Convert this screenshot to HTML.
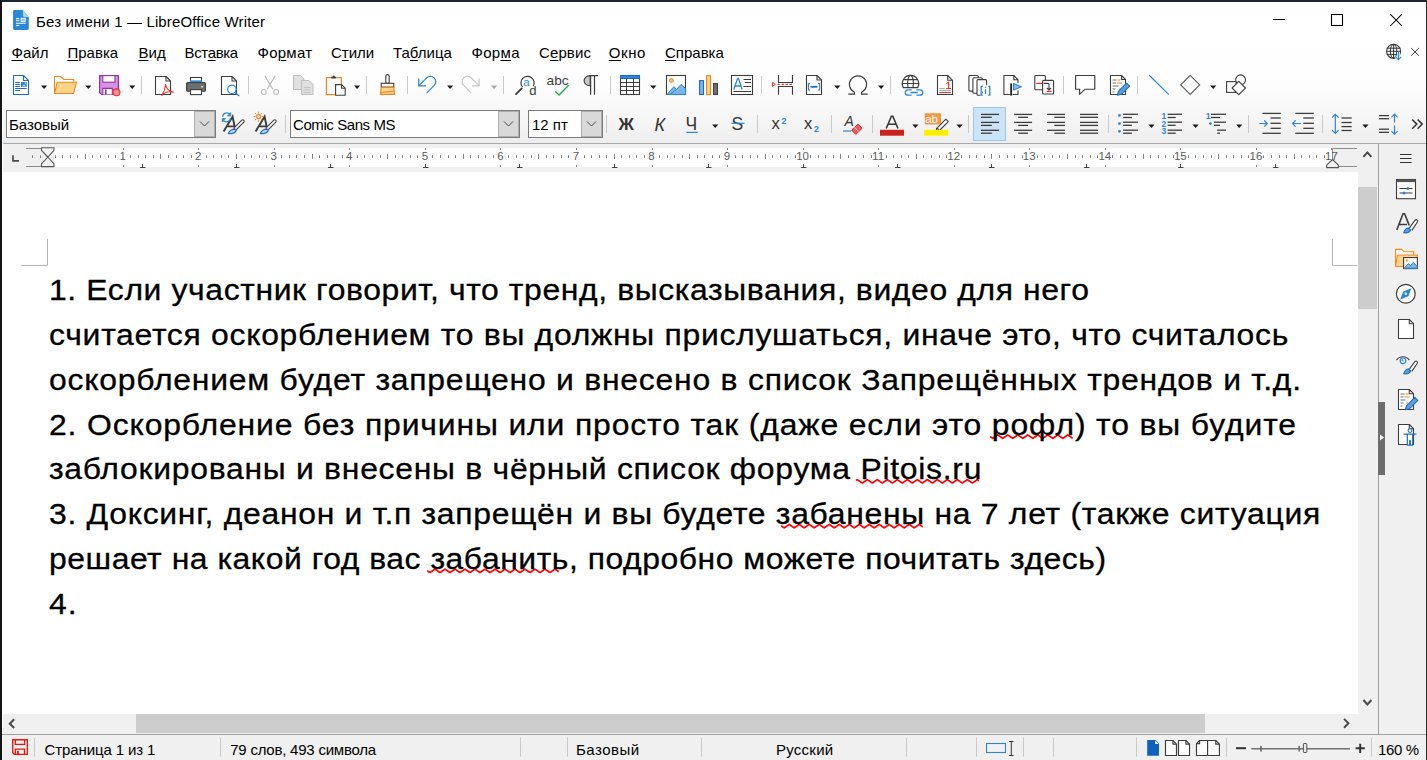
<!DOCTYPE html><html><head><meta charset="utf-8"><style>
*{margin:0;padding:0;box-sizing:border-box}
html,body{width:1427px;height:760px;overflow:hidden;background:#fff;font-family:"Liberation Sans", sans-serif;color:#000}
.a{position:absolute}
.t{position:absolute;white-space:pre;line-height:1}
.doc{-webkit-text-stroke:0.3px #000;transform:scaleX(1.1);transform-origin:0 0}
svg.ov{position:absolute;left:0;top:0;overflow:visible}
u{text-decoration:underline;text-underline-offset:2px;text-decoration-thickness:1px}
</style></head><body>
<div class="a" style="left:0;top:0;width:1427px;height:2px;background:#1f2631"></div>
<div class="a" style="left:0;top:0;width:2px;height:760px;background:#141414"></div>
<div class="a" style="left:1426px;top:0;width:1px;height:760px;background:#2a2a2a"></div>
<div class="a" style="left:2px;top:38px;width:1424px;height:105px;background:linear-gradient(#ffffff 0%,#fdfdfd 45%,#f4f4f4 82%,#ededed 100%)"></div>
<div class="a" style="left:2px;top:143px;width:1424px;height:1px;background:#a9a9a9"></div>
<div class="a" style="left:2px;top:144px;width:1356px;height:28px;background:#f0f0f0"></div>
<div class="a" style="left:54px;top:148px;width:1278px;height:19px;background:#fff"></div>
<div class="a" style="left:2px;top:172px;width:1356px;height:542px;background:#fff"></div>
<div class="a" style="left:1358px;top:144px;width:20px;height:570px;background:#f0f0f0"></div>
<div class="a" style="left:1358px;top:187px;width:19px;height:122px;background:#cdcdcd"></div>
<div class="a" style="left:1378px;top:144px;width:1px;height:590px;background:#a0a0a0"></div>
<div class="a" style="left:1379px;top:144px;width:47px;height:590px;background:#f0f0f0"></div>
<div class="a" style="left:1378px;top:402px;width:7px;height:73px;background:#6d6d6d"></div>
<div class="a" style="left:2px;top:714px;width:1356px;height:20px;background:#f0f0f0"></div>
<div class="a" style="left:136px;top:714px;width:1069px;height:19px;background:#cdcdcd"></div>
<div class="a" style="left:1358px;top:714px;width:20px;height:20px;background:#f0f0f0"></div>
<div class="a" style="left:2px;top:2px;width:1px;height:758px;background:#fff"></div>
<div class="a" style="left:2px;top:734px;width:1424px;height:1px;background:#a0a0a0"></div>
<div class="a" style="left:2px;top:735px;width:1424px;height:25px;background:#f0f0f0"></div>
<svg class="ov" width="1427" height="760" viewBox="0 0 1427 760"><path d="M13.5 75.5H23.5L28.5 80.5V94.5H13.5Z" fill="#fff" stroke="#1c6cc4" stroke-width="1.1" stroke-linejoin="round"/><path d="M23.5 75.5V80.5H28.5" fill="none" stroke="#1c6cc4" stroke-width="1.1" stroke-linejoin="round"/><path d="M15.2 82.5h4.7M15.2 84.5h4.7M15.2 86.5h4.7M15.2 88.5h11.5M15.2 90.5h4.7" stroke="#1c6cc4" stroke-width="1.1"/><rect x="21" y="82" width="5.7" height="5" fill="#2a86d4"/><path d="M22 86.5l2-2 2 2z" fill="#cfe3f7"/><circle cx="25.3" cy="83.2" r=".7" fill="#cfe3f7"/><path d="M41 85.5h6.2l-3.1 3.6z" fill="#1a1a1a"/><path d="M54.5 93.5V76.5h6l3.5 3h9.7v2.6" fill="#fff" stroke="#f0861e" stroke-width="1.1" stroke-linejoin="round"/><path d="M57.2 82.2h19.4l-3.2 11.3H54.5z" fill="#f7d58a" stroke="#f0861e" stroke-width="1.1" stroke-linejoin="round"/><path d="M85.2 85.5h6.2l-3.1 3.6z" fill="#1a1a1a"/><path d="M99.6 75.6h18.8v18.8H101.4l-1.8-1.8z" fill="#d493e3" stroke="#9c2bb2" stroke-width="1.2" stroke-linejoin="round"/><rect x="102.8" y="75.6" width="12.2" height="6.6" fill="#fff" stroke="#9c2bb2" stroke-width="1.1"/><path d="M102.8 94.4v-6h9.5v6" fill="#fff" stroke="#9c2bb2" stroke-width="1.1"/><rect x="105" y="89.5" width="1.6" height="5" fill="#9c2bb2"/><circle cx="116.5" cy="92.3" r="3.4" fill="#f58b8b" stroke="#e5322d" stroke-width="1.1"/><path d="M129.1 85.5h6.2l-3.1 3.6z" fill="#1a1a1a"/><path d="M141.5 76V94" stroke="#c9c9c9" stroke-width="1"/><path d="M155.5 76.5H166.0L170.5 81.0V94.5H155.5Z" fill="#fff" stroke="#3c3c3c" stroke-width="1.1" stroke-linejoin="round"/><path d="M166.0 76.5V81.0H170.5" fill="none" stroke="#3c3c3c" stroke-width="1.1" stroke-linejoin="round"/><path d="M161.8 95.3C164 92 165.5 88 165.6 84.3 166 88.5 169 91 173.5 92.2 169 91.2 165 91.5 161.8 95.3z" fill="none" stroke="#e5322d" stroke-width="1.1" stroke-linejoin="round"/><rect x="190.5" y="77.5" width="11" height="5" fill="#fff" stroke="#3c3c3c" stroke-width="1.1"/><rect x="186.6" y="82.6" width="18.8" height="8.6" rx="1" fill="#6f6f6f" stroke="#3c3c3c" stroke-width="1.1"/><path d="M190 81.3h12" stroke="#2a86d4" stroke-width="1.8"/><rect x="190.5" y="89.6" width="11" height="5" fill="#fff" stroke="#3c3c3c" stroke-width="1.1"/><rect x="201" y="86.3" width="2" height="1" fill="#fff"/><path d="M221.5 76.5H232.0L236.5 81.0V94.5H221.5Z" fill="#fff" stroke="#3c3c3c" stroke-width="1.1" stroke-linejoin="round"/><path d="M232.0 76.5V81.0H236.5" fill="none" stroke="#3c3c3c" stroke-width="1.1" stroke-linejoin="round"/><circle cx="231.9" cy="89.3" r="4.2" fill="#fff" stroke="#2a86d4" stroke-width="1.2"/><path d="M234.9 92.4l4.4 3.6" stroke="#2a86d4" stroke-width="1.3"/><path d="M248.5 76V94" stroke="#c9c9c9" stroke-width="1"/><path d="M264.8 75.8L272.8 89.3M275.2 75.8L267.2 89.3" stroke="#b8b8b8" stroke-width="1.2"/><circle cx="263.8" cy="91.9" r="2.4" fill="#fff" stroke="#b8b8b8" stroke-width="1.1"/><circle cx="276.2" cy="91.9" r="2.4" fill="#fff" stroke="#b8b8b8" stroke-width="1.1"/><path d="M293.5 75.5h7l3.3 3.3v10.7H293.5z" fill="#e0e0e0" stroke="#bdbdbd" stroke-width="1"/><path d="M301.5 80.5h7.5l4 4v10H301.5z" fill="#e0e0e0" stroke="#bdbdbd" stroke-width="1"/><path d="M303.5 87.5h7M303.5 90h7M303.5 92.5h7" stroke="#c4c4c4" stroke-width="1"/><path d="M331 77.6h-4.6v17h8.6M336.4 77.6h5v6.5" fill="none" stroke="#f0861e" stroke-width="1.2"/><path d="M331.2 78.6v-1.8h1.3a1.2 1.2 0 0 1 2.4 0h1.3v1.8z" fill="#3c3c3c"/><path d="M335.6 84.6h6l3.6 3.6v7H335.6z" fill="#fff" stroke="#3c3c3c" stroke-width="1.1" stroke-linejoin="round"/><path d="M341.6 84.6v3.6h3.6" fill="none" stroke="#3c3c3c" stroke-width="1.1"/><path d="M354 85.5h6.2l-3.1 3.6z" fill="#1a1a1a"/><path d="M366.5 76V94" stroke="#c9c9c9" stroke-width="1"/><rect x="385.8" y="74.6" width="3.4" height="9" rx="1.7" fill="#fff" stroke="#3c3c3c" stroke-width="1.1"/><rect x="381.2" y="83.3" width="12.6" height="3.8" fill="#fff" stroke="#3c3c3c" stroke-width="1.1"/><path d="M381.2 87.4h12.6l.8 7H380.4z" fill="#f7d58a" stroke="#f0861e" stroke-width="1.1" stroke-linejoin="round"/><path d="M381 92.5l13-1.5" stroke="#f0861e" stroke-width="1"/><path d="M407.5 76V94" stroke="#c9c9c9" stroke-width="1"/><path d="M418.8 78.4v7.4h7.2" fill="none" stroke="#2a86d4" stroke-width="1.25"/><path d="M419 85.5L426.7 77.9A5.3 5.3 0 0 1 434.2 85.4L426.6 93.1" fill="none" stroke="#2a86d4" stroke-width="1.25"/><path d="M447 85.5h6.2l-3.1 3.6z" fill="#1a1a1a"/><path d="M479.1 78.4v7.4h-7.2" fill="none" stroke="#c6c6c6" stroke-width="1.2"/><path d="M478.9 85.5L471.2 77.9A5.3 5.3 0 0 0 463.7 85.4L471.3 93.1" fill="none" stroke="#c6c6c6" stroke-width="1.2"/><path d="M491 85.5h6.2l-3.1 3.6z" fill="#a8a8a8"/><path d="M503.5 76V94" stroke="#c9c9c9" stroke-width="1"/><path d="M533.2 86.3A6.6 6.6 0 1 0 522.5 87.2" fill="none" stroke="#3c3c3c" stroke-width="1.2"/><path d="M516 94.2l5.8-5.8" stroke="#3c3c3c" stroke-width="1.9" stroke-linecap="round"/><text x="523.2" y="86" font-size="11.5" fill="#2a86d4" font-family="Liberation Sans">a</text><text x="529.2" y="94.6" font-size="13" fill="#3c3c3c" font-family="Liberation Sans">d</text><text x="546.6" y="85" font-size="13.6" fill="#3c3c3c" font-family="Liberation Sans" textLength="22" lengthAdjust="spacingAndGlyphs">abc</text><path d="M555.3 91.4l3.9 3.6 9.4-9.7" fill="none" stroke="#21a95a" stroke-width="1.4"/><path d="M590.2 75.6A6.1 5.1 0 0 0 590.2 85.8z" fill="#c9c9c9" stroke="#3c3c3c" stroke-width="1.1"/><path d="M589.5 75.6H598M590.6 75.6V94.7M594.5 75.6V94.7" fill="none" stroke="#3c3c3c" stroke-width="1.2"/><path d="M610.5 76V94" stroke="#c9c9c9" stroke-width="1"/><rect x="620.5" y="75.5" width="19" height="19" fill="#fff" stroke="#3c3c3c" stroke-width="1.1"/><rect x="620.5" y="75.5" width="19" height="3" fill="#2a86d4" stroke="#1c6cc4" stroke-width="1"/><path d="M620.5 82.5h19M620.5 86.5h19M620.5 90.5h19M626.5 78.5v16M633.5 78.5v16" stroke="#3c3c3c" stroke-width="1"/><path d="M650.2 85.5h6.2l-3.1 3.6z" fill="#1a1a1a"/><rect x="666.5" y="75.5" width="19" height="19" fill="#fff" stroke="#3c3c3c" stroke-width="1.1"/><circle cx="671.4" cy="80.5" r="1.9" fill="#f6c27a" stroke="#f0861e" stroke-width="1"/><path d="M667 94.4L673.8 86.8 676.6 89.4 681 84.4 685.6 88.6V94.4Z" fill="#7db4ea" stroke="#2a86d4" stroke-width="1" stroke-linejoin="round"/><path d="M670 94.4l6.6-5" stroke="#2a86d4" stroke-width="1"/><rect x="699.6" y="80.6" width="3.9" height="13.9" fill="#7db4ea" stroke="#1c6cc4" stroke-width="1.1"/><rect x="706.6" y="75.6" width="3.9" height="18.9" fill="#f7d58a" stroke="#f0861e" stroke-width="1.1"/><rect x="713.6" y="83.6" width="3.9" height="10.9" fill="#707070" stroke="#3c3c3c" stroke-width="1.1"/><rect x="731.5" y="75.5" width="21" height="19" fill="#fff" stroke="#3c3c3c" stroke-width="1.1"/><path d="M733.8 89.5L737.6 78.3h.8l3.8 11.2M735 86h6" fill="none" stroke="#2a86d4" stroke-width="1.3"/><path d="M743.5 79.5h7.5M745 82.5h6M743.5 86.5h7.5M733.5 91.5h17.5" stroke="#3c3c3c" stroke-width="1"/><path d="M761.5 76V94" stroke="#c9c9c9" stroke-width="1"/><path d="M778.5 75v7.5h14V75M778.5 94.8v-8.3h14v8.3" fill="none" stroke="#3c3c3c" stroke-width="1.15"/><path d="M777.5 84.4h15" stroke="#e5322d" stroke-width="1.1" stroke-dasharray="2.4 1.6"/><path d="M772.4 82.3v4.2l2.9-2.1z" fill="#fff" stroke="#e5322d" stroke-width="1"/><path d="M806.5 75.5H817.0L821.5 80.0V94.5H806.5Z" fill="#fff" stroke="#3c3c3c" stroke-width="1.1" stroke-linejoin="round"/><path d="M817.0 75.5V80.0H821.5" fill="none" stroke="#3c3c3c" stroke-width="1.1" stroke-linejoin="round"/><path d="M810 83.6h-1.6v6.4h1.6M818 83.6h1.6v6.4H818" fill="none" stroke="#2a86d4" stroke-width="1.1"/><path d="M810.6 86.8h6.8" stroke="#1c6cc4" stroke-width="1.8"/><path d="M834.2 85.5h6.2l-3.1 3.6z" fill="#1a1a1a"/><path d="M848.3 94.2H854.4V92.2A8.6 8.6 0 1 1 861.6 92.2V94.2H867.7" fill="none" stroke="#3c3c3c" stroke-width="1.2" stroke-linejoin="round"/><path d="M878 85.5h6.2l-3.1 3.6z" fill="#1a1a1a"/><path d="M890.5 76V94" stroke="#c9c9c9" stroke-width="1"/><path d="M903.34 87.6A8.2 8.2 0 1 1 917.66 87.6Z" fill="#fff" stroke="#3c3c3c" stroke-width="1.2" stroke-linejoin="round"/><path d="M903.6 79.6h13.8M902.4 83.5h16.2M910.5 75.4A2.9 8.2 0 0 0 907.97 87.6M910.5 75.4A2.9 8.2 0 0 1 913.03 87.6" fill="none" stroke="#3c3c3c" stroke-width="1.1"/><path d="M911.6 89.8h-3.6a2.7 2.7 0 0 0 0 5.4h3.6M916.4 89.8h3.6a2.7 2.7 0 0 1 0 5.4h-3.6M910.4 92.5h7.4" fill="none" stroke="#2a86d4" stroke-width="1.3"/><path d="M937.5 75.5H947.7L952.5 80.3V94.5H937.5Z" fill="#fff" stroke="#3c3c3c" stroke-width="1.1" stroke-linejoin="round"/><path d="M947.7 75.5V80.3H952.5" fill="none" stroke="#3c3c3c" stroke-width="1.1" stroke-linejoin="round"/><path d="M946.3 83.6l2.3-1.3v6.2M946.2 88.5h4.8" fill="none" stroke="#e5322d" stroke-width="1.2"/><path d="M939.3 88.5h5.3M939.3 90.5h11.5" stroke="#a8a8a8" stroke-width="1"/><path d="M939.3 92.5h11.5" stroke="#e5322d" stroke-width="1.1"/><rect x="968.9" y="75.5" width="9.4" height="15.6" rx="1" fill="#fff" stroke="#3c3c3c" stroke-width="1.1"/><rect x="972.9" y="77.7" width="9.4" height="15.6" rx="1" fill="#fff" stroke="#3c3c3c" stroke-width="1.1"/><path d="M980.4 95.3h-2.4a1 1 0 0 1-1-1V80.6a1 1 0 0 1 1-1h7.6a1 1 0 0 1 1 1v4.6" fill="#fff" stroke="#3c3c3c" stroke-width="1.1"/><path d="M982.8 86.4h-1.6v8.8h1.6M988.2 86.4h1.6v8.8h-1.6M985.5 89.2v4.8" fill="none" stroke="#2a86d4" stroke-width="1.3"/><rect x="984.9" y="86.6" width="1.3" height="1.3" fill="#2a86d4"/><path d="M1009.8 94.5H1003.9V75.5H1013.8L1018 79.7V83M1018 90.6V94.5H1012.6" fill="none" stroke="#3c3c3c" stroke-width="1.1" stroke-linejoin="round"/><path d="M1013.8 75.5V79.7H1018" fill="none" stroke="#3c3c3c" stroke-width="1.1"/><rect x="1010.2" y="83.4" width="1.9" height="12.2" fill="#2a2a2a"/><path d="M1013.6 83.6L1021.4 86.8 1013.6 90Z" fill="#8dbfee" stroke="#2a86d4" stroke-width="1.1" stroke-linejoin="round"/><rect x="1034.8" y="75.5" width="10.6" height="14.2" rx="1" fill="#fff" stroke="#3c3c3c" stroke-width="1.1"/><rect x="1042.6" y="80.4" width="11" height="13.6" rx="1" fill="#fff" stroke="#3c3c3c" stroke-width="1.1"/><path d="M1036.2 83.4h6.4" stroke="#e5322d" stroke-width="1.2"/><path d="M1043.6 83.4h4.4a1 1 0 0 1 1 1v5.4M1046.9 88l2.1 2 2.1-2" fill="none" stroke="#3c3c3c" stroke-width="1.1"/><path d="M1046.6 91.4h5" stroke="#e5322d" stroke-width="1.2"/><path d="M1063.5 76V94" stroke="#c9c9c9" stroke-width="1"/><path d="M1075.6 75.5h19.2v13.7h-9.6l-5.6 5.2v-5.2h-4z" fill="#fff" stroke="#3c3c3c" stroke-width="1.15" stroke-linejoin="round"/><path d="M1110.5 75.5H1121.5L1125.5 79.5V94.5H1110.5Z" fill="#fff" stroke="#3c3c3c" stroke-width="1.1" stroke-linejoin="round"/><path d="M1121.5 75.5V79.5H1125.5" fill="none" stroke="#3c3c3c" stroke-width="1.1" stroke-linejoin="round"/><path d="M1112.5 80h4M1112.5 83h3.5M1112.5 86h6M1112.5 89h3M1112.5 92h2" stroke="#6f6f6f" stroke-width="1"/><path d="M1117.5 80h3M1116.5 83h5.5M1119 89h2" stroke="#f0861e" stroke-width="1"/><path d="M1117.4 95.3l1-4 8.2-8.2 3 3-8.2 8.2z" fill="#5c9fe3" stroke="#1c6cc4" stroke-width="1.1" stroke-linejoin="round"/><path d="M1137.5 76V94" stroke="#c9c9c9" stroke-width="1"/><path d="M1149.2 75.3L1168.9 94.6" stroke="#2a86d4" stroke-width="1.25"/><path d="M1190.2 75.4L1199.7 84.9 1190.2 94.4 1180.7 84.9Z" fill="#fff" stroke="#5a5a5a" stroke-width="1.2" stroke-linejoin="round"/><path d="M1210.1 85.5h6.2l-3.1 3.6z" fill="#1a1a1a"/><rect x="1226.6" y="81.6" width="9.6" height="10.8" fill="#fff" stroke="#3c3c3c" stroke-width="1.1"/><circle cx="1240.6" cy="79.8" r="4.9" fill="#fff" stroke="#3c3c3c" stroke-width="1.1"/><path d="M1238.8 81.3L1245.5 88 1238.8 94.7 1232.1 88Z" fill="#fff" stroke="#3c3c3c" stroke-width="1.1" stroke-linejoin="round"/><path d="M13 11.4a1.4 1.4 0 0 1 1.4-1.4h8.5l5.9 6.9v11.7a1.4 1.4 0 0 1-1.4 1.4H14.4a1.4 1.4 0 0 1-1.4-1.4z" fill="#2b87d9"/><path d="M22.9 10v5.6a1.3 1.3 0 0 0 1.3 1.3h4.6z" fill="#a9d5f6"/><path d="M16 18.6h3.3M16 20.8h3.3M16 23.3h9.8M16 25.5h3.3" stroke="#fff" stroke-width="1.1"/><rect x="21.1" y="18.2" width="4.4" height="3.3" fill="#8ec8f3" stroke="#fff" stroke-width=".8"/><path d="M1273 19.5h12" stroke="#000" stroke-width="1"/><rect x="1331.5" y="14.5" width="11" height="11" fill="none" stroke="#000" stroke-width="1.1"/><path d="M1390.2 14.2l11.8 11.8M1402 14.2l-11.8 11.8" stroke="#000" stroke-width="1.05"/><circle cx="1393.6" cy="51.3" r="7" fill="none" stroke="#333" stroke-width="1.1"/><path d="M1386.6 48.2h14M1386.6 51.3h14M1386.6 54.4h12M1393.6 44.3v14" stroke="#333" stroke-width="1"/><ellipse cx="1393.6" cy="51.3" rx="3.2" ry="7" fill="none" stroke="#333" stroke-width="1"/><path d="M1398.5 52v7.4M1395.7 56.8l2.8 2.8 2.8-2.8" fill="none" stroke="#fff" stroke-width="2.6"/><path d="M1398.5 52v7.4M1395.7 56.8l2.8 2.8 2.8-2.8" fill="none" stroke="#2a86d4" stroke-width="1.2"/><path d="M1411.2 48.1l7.6 7.6M1418.8 48.1l-7.6 7.6" stroke="#333" stroke-width="1"/><rect x="6.5" y="110.5" width="209" height="27" fill="#fff" stroke="#7b7b7b" stroke-width="1"/><rect x="194.5" y="111.5" width="20" height="25" fill="#d9d9d9" stroke="#adadad" stroke-width="1"/><path d="M200 121.5l4.5 4.5 4.5-4.5" fill="none" stroke="#444" stroke-width="1"/><path d="M223.6 131.4L232.6 116.6L234.6 126.4H227.6" fill="none" stroke="#3c3c3c" stroke-width="1.9" stroke-linejoin="miter"/><path d="M235.6 128.4L242.8 121.2" stroke="#3c3c3c" stroke-width="3.8" stroke-linecap="round"/><path d="M235.6 128.4L242.8 121.2" stroke="#fff" stroke-width="1.7" stroke-linecap="round"/><path d="M228.4 133.4C229.4 130.6 232.6 128.4 236.4 129.6C236.4 132.4 232.4 134.2 228.4 133.4Z" fill="#cfe3f7" stroke="#1c6cc4" stroke-width="1.3" stroke-linejoin="round"/><path d="M222.6 116.6a4.1 4.1 0 0 1 7.4-2M230.4 118.2a4.1 4.1 0 0 1-7.4 2" fill="none" stroke="#2a86d4" stroke-width="1.3"/><path d="M230.7 112.6v3.4h-3.2z M222.3 122v-3.4h3.2z" fill="#2a86d4" stroke="#2a86d4" stroke-width=".8" stroke-linejoin="round"/><path d="M255.6 131.4L264.6 116.6L266.6 126.4H259.6" fill="none" stroke="#3c3c3c" stroke-width="1.9" stroke-linejoin="miter"/><path d="M267.6 128.4L274.8 121.2" stroke="#3c3c3c" stroke-width="3.8" stroke-linecap="round"/><path d="M267.6 128.4L274.8 121.2" stroke="#fff" stroke-width="1.7" stroke-linecap="round"/><path d="M260.4 133.4C261.4 130.6 264.6 128.4 268.4 129.6C268.4 132.4 264.4 134.2 260.4 133.4Z" fill="#cfe3f7" stroke="#1c6cc4" stroke-width="1.3" stroke-linejoin="round"/><circle cx="258.6" cy="116.6" r="2" fill="none" stroke="#f0861e" stroke-width="1.1"/><path d="M258.6 111.6v2M258.6 119.6v2M253.6 116.6h2M261.6 116.6h2M255 113l1.4 1.4M260.8 118.8l1.4 1.4M255 120.2l1.4-1.4M260.8 114.4l1.4-1.4" stroke="#f0861e" stroke-width="1"/><path d="M285.5 115V133" stroke="#c9c9c9" stroke-width="1"/><rect x="290.5" y="110.5" width="229" height="27" fill="#fff" stroke="#7b7b7b" stroke-width="1"/><rect x="498.5" y="111.5" width="20" height="25" fill="#d9d9d9" stroke="#adadad" stroke-width="1"/><path d="M504 121.5l4.5 4.5 4.5-4.5" fill="none" stroke="#444" stroke-width="1"/><rect x="528.5" y="110.5" width="74" height="27" fill="#fff" stroke="#7b7b7b" stroke-width="1"/><rect x="581.5" y="111.5" width="20" height="25" fill="#d9d9d9" stroke="#adadad" stroke-width="1"/><path d="M587 121.5l4.5 4.5 4.5-4.5" fill="none" stroke="#444" stroke-width="1"/><path d="M606.5 115V133" stroke="#c9c9c9" stroke-width="1"/><text x="618.6" y="130" font-size="17" font-weight="bold" fill="#333" font-family="Liberation Sans">Ж</text><text x="654.5" y="130.6" font-size="18" font-style="italic" fill="#333" font-family="Liberation Sans">К</text><text x="685.6" y="130" font-size="17.5" fill="#333" font-family="Liberation Sans">Ч</text><path d="M686.3 132.4h11.4" stroke="#2a86d4" stroke-width="1.2"/><path d="M712.1 124.5h6.2l-3.1 3.6z" fill="#1a1a1a"/><text x="731.6" y="130.2" font-size="17.5" fill="#333" font-family="Liberation Sans">S</text><path d="M731.2 123.3h13.4" stroke="#2a86d4" stroke-width="1.2"/><path d="M757.5 115V133" stroke="#c9c9c9" stroke-width="1"/><text x="771.6" y="128.7" font-size="16.6" fill="#333" font-family="Liberation Sans">x</text><text x="781.5" y="123.6" font-size="9" font-weight="bold" fill="#2a86d4" font-family="Liberation Sans">2</text><text x="804.1" y="128.7" font-size="16.6" fill="#333" font-family="Liberation Sans">x</text><text x="814" y="131.6" font-size="9" font-weight="bold" fill="#2a86d4" font-family="Liberation Sans">2</text><path d="M831.5 115V133" stroke="#c9c9c9" stroke-width="1"/><text x="844.5" y="126" font-size="14" font-style="italic" fill="#333" font-family="Liberation Sans">A</text><path d="M843 131h8" stroke="#2a86d4" stroke-width="1.2"/><path d="M851.6 130.2l6.4-6.2 4.2 4.2-6.4 6.2z" fill="#f05a5a" stroke="#d32f2f" stroke-width="1" stroke-linejoin="round"/><path d="M854.6 127.3l4.2 4.2" stroke="#fff" stroke-width=".8"/><path d="M872.5 115V133" stroke="#c9c9c9" stroke-width="1"/><path d="M886.2 128.5L891.4 116.3h1.4l5.2 12.2M888 124.3h8.2" fill="none" stroke="#333" stroke-width="1.5"/><rect x="880" y="129.8" width="24" height="5.9" fill="#c9211e"/><path d="M912.3 124.5h6.2l-3.1 3.6z" fill="#1a1a1a"/><rect x="924.8" y="113.2" width="16.2" height="11.3" fill="#f79646"/><text x="925.2" y="123.4" font-size="11.5" fill="#fff" font-family="Liberation Sans">ab</text><path d="M936.5 128.6l9.4-9.4 2.4 2.4-9.4 9.4h-2.4z" fill="#fff" stroke="#3c3c3c" stroke-width="1.1" stroke-linejoin="round"/><path d="M936.5 128.6l1 -1 1.6 1.6-1 1z" fill="#3c3c3c"/><rect x="924.1" y="129.8" width="24" height="5.9" fill="#ffee00"/><path d="M956.5 124.5h6.2l-3.1 3.6z" fill="#1a1a1a"/><path d="M968.5 115V133" stroke="#c9c9c9" stroke-width="1"/><rect x="973.5" y="107.5" width="32" height="33" fill="#cce4f7" stroke="#99c9ef" stroke-width="1"/><path d="M981 114.4H999.1" stroke="#3c3c3c" stroke-width="1.3"/><path d="M981 117.3H991.8" stroke="#3c3c3c" stroke-width="1.3"/><path d="M981 122.4H999.1" stroke="#3c3c3c" stroke-width="1.3"/><path d="M981 125.4H991.8" stroke="#3c3c3c" stroke-width="1.3"/><path d="M981 130.3H999.1" stroke="#3c3c3c" stroke-width="1.3"/><path d="M981 133.2H991.8" stroke="#3c3c3c" stroke-width="1.3"/><path d="M1014.1 114.4H1032.1" stroke="#3c3c3c" stroke-width="1.3"/><path d="M1018.2 117.3H1028" stroke="#3c3c3c" stroke-width="1.3"/><path d="M1014.1 122.4H1032.1" stroke="#3c3c3c" stroke-width="1.3"/><path d="M1018.2 125.4H1028" stroke="#3c3c3c" stroke-width="1.3"/><path d="M1014.1 130.3H1032.1" stroke="#3c3c3c" stroke-width="1.3"/><path d="M1018.2 133.2H1028" stroke="#3c3c3c" stroke-width="1.3"/><path d="M1047.1 114.4H1065" stroke="#3c3c3c" stroke-width="1.3"/><path d="M1054.3 117.3H1065" stroke="#3c3c3c" stroke-width="1.3"/><path d="M1047.1 122.4H1065" stroke="#3c3c3c" stroke-width="1.3"/><path d="M1054.3 125.4H1065" stroke="#3c3c3c" stroke-width="1.3"/><path d="M1047.1 130.3H1065" stroke="#3c3c3c" stroke-width="1.3"/><path d="M1054.3 133.2H1065" stroke="#3c3c3c" stroke-width="1.3"/><path d="M1080 114.4H1098" stroke="#3c3c3c" stroke-width="1.3"/><path d="M1080 117.3H1098" stroke="#3c3c3c" stroke-width="1.3"/><path d="M1080 122.4H1098" stroke="#3c3c3c" stroke-width="1.3"/><path d="M1080 125.4H1098" stroke="#3c3c3c" stroke-width="1.3"/><path d="M1080 130.3H1098" stroke="#3c3c3c" stroke-width="1.3"/><path d="M1080 133.2H1098" stroke="#3c3c3c" stroke-width="1.3"/><path d="M1108.5 115V133" stroke="#c9c9c9" stroke-width="1"/><circle cx="1119.5" cy="115.4" r="1.4" fill="#2a86d4"/><circle cx="1119.5" cy="123.6" r="1.4" fill="#2a86d4"/><circle cx="1119.5" cy="131.3" r="1.4" fill="#2a86d4"/><path d="M1123.1 114.3H1137.9" stroke="#3c3c3c" stroke-width="1.3"/><path d="M1123.1 117.5H1131.9" stroke="#3c3c3c" stroke-width="1.3"/><path d="M1123.1 122.2H1137.9" stroke="#3c3c3c" stroke-width="1.3"/><path d="M1123.1 125.3H1131.9" stroke="#3c3c3c" stroke-width="1.3"/><path d="M1123.1 130.2H1137.9" stroke="#3c3c3c" stroke-width="1.3"/><path d="M1123.1 133.2H1131.9" stroke="#3c3c3c" stroke-width="1.3"/><path d="M1148.4 124.5h6.2l-3.1 3.6z" fill="#1a1a1a"/><text x="1161.6" y="118.6" font-size="8.5" font-weight="bold" fill="#2a86d4" font-family="Liberation Sans">1</text><text x="1161.6" y="126.6" font-size="8.5" font-weight="bold" fill="#2a86d4" font-family="Liberation Sans">2</text><text x="1161.6" y="134.4" font-size="8.5" font-weight="bold" fill="#2a86d4" font-family="Liberation Sans">3</text><path d="M1167.6 114.3H1182" stroke="#3c3c3c" stroke-width="1.3"/><path d="M1167.6 117.5H1175.7" stroke="#3c3c3c" stroke-width="1.3"/><path d="M1167.6 122.2H1182" stroke="#3c3c3c" stroke-width="1.3"/><path d="M1167.6 125.3H1175.7" stroke="#3c3c3c" stroke-width="1.3"/><path d="M1167.6 130.2H1182" stroke="#3c3c3c" stroke-width="1.3"/><path d="M1167.6 133.2H1175.7" stroke="#3c3c3c" stroke-width="1.3"/><path d="M1192.5 124.5h6.2l-3.1 3.6z" fill="#1a1a1a"/><text x="1205.8" y="118.6" font-size="8.5" font-weight="bold" fill="#2a86d4" font-family="Liberation Sans">1</text><circle cx="1210.4" cy="123.6" r="1.4" fill="#2a86d4"/><path d="M1211 114.3H1226" stroke="#3c3c3c" stroke-width="1.3"/><path d="M1211 117.5H1220" stroke="#3c3c3c" stroke-width="1.3"/><path d="M1214 122.2H1226" stroke="#3c3c3c" stroke-width="1.3"/><path d="M1214 125.3H1220" stroke="#3c3c3c" stroke-width="1.3"/><path d="M1217.2 130.2H1226" stroke="#3c3c3c" stroke-width="1.3"/><path d="M1217.2 133.2H1220" stroke="#3c3c3c" stroke-width="1.3"/><path d="M1236.1 124.5h6.2l-3.1 3.6z" fill="#1a1a1a"/><path d="M1248.5 115V133" stroke="#c9c9c9" stroke-width="1"/><path d="M1262.4 113.4H1280.8" stroke="#3c3c3c" stroke-width="1.3"/><path d="M1270.5 118H1280.8" stroke="#3c3c3c" stroke-width="1.3"/><path d="M1270.5 123.3H1280.8" stroke="#3c3c3c" stroke-width="1.3"/><path d="M1270.5 128.3H1280.8" stroke="#3c3c3c" stroke-width="1.3"/><path d="M1262.4 133.3H1280.8" stroke="#3c3c3c" stroke-width="1.3"/><path d="M1259.3 123.5h7.8M1264.2 120.4l3.1 3.1-3.1 3.1" fill="none" stroke="#2a86d4" stroke-width="1.2"/><path d="M1295.3 113.4H1313.9" stroke="#3c3c3c" stroke-width="1.3"/><path d="M1303.3 118H1313.9" stroke="#3c3c3c" stroke-width="1.3"/><path d="M1303.3 123.3H1313.9" stroke="#3c3c3c" stroke-width="1.3"/><path d="M1303.3 128.3H1313.9" stroke="#3c3c3c" stroke-width="1.3"/><path d="M1295.3 133.3H1313.9" stroke="#3c3c3c" stroke-width="1.3"/><path d="M1300.9 123.5h-8.2M1295.6 120.4l-3.1 3.1 3.1 3.1" fill="none" stroke="#2a86d4" stroke-width="1.2"/><path d="M1322.5 115V133" stroke="#c9c9c9" stroke-width="1"/><path d="M1335.3 114.6v18.6M1332 117.6l3.3-3.3 3.3 3.3M1332 130.2l3.3 3.3 3.3-3.3" fill="none" stroke="#2a86d4" stroke-width="1.2"/><path d="M1341.5 118H1351.7" stroke="#3c3c3c" stroke-width="1.3"/><path d="M1341.5 122.5H1351.7" stroke="#3c3c3c" stroke-width="1.3"/><path d="M1341.5 126.6H1351.7" stroke="#3c3c3c" stroke-width="1.3"/><path d="M1341.5 130.5H1351.7" stroke="#3c3c3c" stroke-width="1.3"/><path d="M1362.3 124.5h6.2l-3.1 3.6z" fill="#1a1a1a"/><path d="M1379 115.6H1389" stroke="#3c3c3c" stroke-width="1.3"/><path d="M1379 118.7H1389" stroke="#3c3c3c" stroke-width="1.3"/><path d="M1379 129.2H1389" stroke="#3c3c3c" stroke-width="1.3"/><path d="M1379 132.3H1389" stroke="#3c3c3c" stroke-width="1.3"/><path d="M1394.5 114.2v8.4M1391.4 117.3l3.1-3.1 3.1 3.1M1394.5 125.4v8.8M1391.4 131.1l3.1 3.1 3.1-3.1" fill="none" stroke="#2a86d4" stroke-width="1.2"/><path d="M1412.2 119.5l4.6 4.6-4.6 4.6M1417.6 119.5l4.6 4.6-4.6 4.6" fill="none" stroke="#333" stroke-width="1.5"/><path d="M13 155.3v5.5h6" fill="none" stroke="#4a4a4a" stroke-width="1.7"/><path d="M32.5 155.3V158 M40.5 155.3V158 M55.5 155.3V158 M62.5 155.3V158 M70.5 155.3V158 M77.5 155.3V158 M85.5 153.8V158.8 M92.5 155.3V158 M100.5 155.3V158 M108.5 155.3V158 M115.5 155.3V158 M130.5 155.3V158 M138.5 155.3V158 M145.5 155.3V158 M153.5 155.3V158 M160.5 153.8V158.8 M168.5 155.3V158 M176.5 155.3V158 M183.5 155.3V158 M191.5 155.3V158 M206.5 155.3V158 M213.5 155.3V158 M221.5 155.3V158 M228.5 155.3V158 M236.5 153.8V158.8 M244.5 155.3V158 M251.5 155.3V158 M259.5 155.3V158 M266.5 155.3V158 M281.5 155.3V158 M289.5 155.3V158 M296.5 155.3V158 M304.5 155.3V158 M312.5 153.8V158.8 M319.5 155.3V158 M327.5 155.3V158 M334.5 155.3V158 M342.5 155.3V158 M357.5 155.3V158 M364.5 155.3V158 M372.5 155.3V158 M380.5 155.3V158 M387.5 153.8V158.8 M395.5 155.3V158 M402.5 155.3V158 M410.5 155.3V158 M417.5 155.3V158 M432.5 155.3V158 M440.5 155.3V158 M448.5 155.3V158 M455.5 155.3V158 M463.5 153.8V158.8 M470.5 155.3V158 M478.5 155.3V158 M485.5 155.3V158 M493.5 155.3V158 M508.5 155.3V158 M516.5 155.3V158 M523.5 155.3V158 M531.5 155.3V158 M538.5 153.8V158.8 M546.5 155.3V158 M553.5 155.3V158 M561.5 155.3V158 M568.5 155.3V158 M584.5 155.3V158 M591.5 155.3V158 M599.5 155.3V158 M606.5 155.3V158 M614.5 153.8V158.8 M621.5 155.3V158 M629.5 155.3V158 M636.5 155.3V158 M644.5 155.3V158 M659.5 155.3V158 M667.5 155.3V158 M674.5 155.3V158 M682.5 155.3V158 M689.5 153.8V158.8 M697.5 155.3V158 M704.5 155.3V158 M712.5 155.3V158 M719.5 155.3V158 M735.5 155.3V158 M742.5 155.3V158 M750.5 155.3V158 M757.5 155.3V158 M765.5 153.8V158.8 M772.5 155.3V158 M780.5 155.3V158 M787.5 155.3V158 M795.5 155.3V158 M810.5 155.3V158 M818.5 155.3V158 M825.5 155.3V158 M833.5 155.3V158 M840.5 153.8V158.8 M848.5 155.3V158 M855.5 155.3V158 M863.5 155.3V158 M871.5 155.3V158 M886.5 155.3V158 M893.5 155.3V158 M901.5 155.3V158 M908.5 155.3V158 M916.5 153.8V158.8 M923.5 155.3V158 M931.5 155.3V158 M939.5 155.3V158 M946.5 155.3V158 M961.5 155.3V158 M969.5 155.3V158 M976.5 155.3V158 M984.5 155.3V158 M991.5 153.8V158.8 M999.5 155.3V158 M1007.5 155.3V158 M1014.5 155.3V158 M1022.5 155.3V158 M1037.5 155.3V158 M1044.5 155.3V158 M1052.5 155.3V158 M1059.5 155.3V158 M1067.5 153.8V158.8 M1075.5 155.3V158 M1082.5 155.3V158 M1090.5 155.3V158 M1097.5 155.3V158 M1112.5 155.3V158 M1120.5 155.3V158 M1127.5 155.3V158 M1135.5 155.3V158 M1143.5 153.8V158.8 M1150.5 155.3V158 M1158.5 155.3V158 M1165.5 155.3V158 M1173.5 155.3V158 M1188.5 155.3V158 M1195.5 155.3V158 M1203.5 155.3V158 M1211.5 155.3V158 M1218.5 153.8V158.8 M1226.5 155.3V158 M1233.5 155.3V158 M1241.5 155.3V158 M1248.5 155.3V158 M1263.5 155.3V158 M1271.5 155.3V158 M1279.5 155.3V158 M1286.5 155.3V158 M1294.5 153.8V158.8 M1301.5 155.3V158 M1309.5 155.3V158 M1316.5 155.3V158 M1324.5 155.3V158" stroke="#7c7c7c" stroke-width="1"/><path d="M123.5 148V150M123.5 165V167 M198.5 148V150M198.5 165V167 M274.5 148V150M274.5 165V167 M349.5 148V150M349.5 165V167 M425.5 148V150M425.5 165V167 M500.5 148V150M500.5 165V167 M576.5 148V150M576.5 165V167 M652.5 148V150M652.5 165V167 M727.5 148V150M727.5 165V167 M803.5 148V150M803.5 165V167 M878.5 148V150M878.5 165V167 M954.5 148V150M954.5 165V167 M1029.5 148V150M1029.5 165V167 M1105.5 148V150M1105.5 165V167 M1180.5 148V150M1180.5 165V167 M1256.5 148V150M1256.5 165V167 M1331.5 148V150M1331.5 165V167" stroke="#8a8a8a" stroke-width="1"/><path d="M142.5 164V167.5M140.0 167.5H145.5 M236.5 164V167.5M234.0 167.5H239.5 M330.5 164V167.5M328.0 167.5H333.5 M425.5 164V167.5M423.0 167.5H428.5 M519.5 164V167.5M517.0 167.5H522.5 M614.5 164V167.5M612.0 167.5H617.5 M708.5 164V167.5M706.0 167.5H711.5 M803.5 164V167.5M801.0 167.5H806.5 M897.5 164V167.5M895.0 167.5H900.5 M991.5 164V167.5M989.0 167.5H994.5 M1086.5 164V167.5M1084.0 167.5H1089.5 M1180.5 164V167.5M1178.0 167.5H1183.5 M1275.5 164V167.5M1273.0 167.5H1278.5" stroke="#444" stroke-width="1"/><path d="M26 148.5H42M26 166.5H42" stroke="#8c8c8c" stroke-width="1"/><path d="M41.5 147.8H54V150.3L47.8 157 54 163.9V166.6H41.5V163.9L47.8 157 41.5 150.3Z" fill="#f2f2f2" stroke="#555" stroke-width="1.1" stroke-linejoin="round"/><path d="M1357 148.5H1332.5V160M1332 166.5H1357" fill="none" stroke="#8c8c8c" stroke-width="1"/><path d="M1332.5 159.5L1338.4 165.2V167.6H1326.6V165.2Z" fill="#f2f2f2" stroke="#555" stroke-width="1.1" stroke-linejoin="round"/><path d="M1363.4 156.8l4 -4.4 4 4.4" fill="none" stroke="#4a4a4a" stroke-width="2"/><path d="M1363.4 700l4 4.5 4-4.5" fill="none" stroke="#4a4a4a" stroke-width="2"/><path d="M14.2 719.3l-4.4 4.4 4.4 4.4" fill="none" stroke="#4a4a4a" stroke-width="2.1"/><path d="M1344 718.9l4.4 4.4-4.4 4.4" fill="none" stroke="#4a4a4a" stroke-width="2"/><path d="M1400 154.5h11.6M1400 158.5h11.6M1400 162.5h11.6" stroke="#333" stroke-width="1.1"/><rect x="1396.5" y="179.5" width="19" height="19.2" fill="#fff" stroke="#3c3c3c" stroke-width="1.1"/><rect x="1396.5" y="179.5" width="19" height="2.6" fill="#555"/><path d="M1399.5 188.5h13M1399.5 193h13" stroke="#3c3c3c" stroke-width="1"/><circle cx="1407.8" cy="188.5" r="1.5" fill="#2a86d4"/><circle cx="1404" cy="193" r="1.5" fill="#2a86d4"/><path d="M1396.8 230L1403 213.8h1.6l4.6 11.6M1399.5 224.5h7.5" fill="none" stroke="#3c3c3c" stroke-width="1.6"/><path d="M1409 228.6l6.2-8.6a1.5 1.5 0 0 1 2.3 1.8l-5.6 8.6" fill="#fff" stroke="#3c3c3c" stroke-width="1.1"/><path d="M1408.3 228c-2 0-3.6 1.8-4.6 4.8 3.1.4 5.8-.5 7-2.8z" fill="#5c9fe3" stroke="#1c6cc4" stroke-width="1.1" stroke-linejoin="round"/><path d="M1395.6 266V249.4h6l2.4 2.4h9.6v3" fill="#fff" stroke="#f0861e" stroke-width="1.1"/><path d="M1397.4 255h20l-2.5 11.5H1395.6z" fill="#f7d58a" stroke="#f0861e" stroke-width="1.1"/><rect x="1403.6" y="257.6" width="13.8" height="11" fill="#fff" stroke="#3c3c3c" stroke-width="1.1"/><circle cx="1406.8" cy="260.6" r="1.1" fill="#f0861e"/><path d="M1404 268.2l4.5-4.6 2 2 2.8-3.2 4 4v1.8z" fill="#7db4ea" stroke="#2a86d4" stroke-width=".9"/><circle cx="1405.8" cy="293.8" r="9.4" fill="#fff" stroke="#3c3c3c" stroke-width="1.2"/><path d="M1411.4 288.2l-3 8-8.2 3.2 3-8z" fill="#2a86d4"/><circle cx="1405.8" cy="293.8" r="1.2" fill="#fff"/><path d="M1398.5 319.5H1409.3L1413.5 323.7V338.5H1398.5Z" fill="#fff" stroke="#3c3c3c" stroke-width="1.1" stroke-linejoin="round"/><path d="M1409.3 319.5V323.7H1413.5" fill="none" stroke="#3c3c3c" stroke-width="1.1" stroke-linejoin="round"/><path d="M1396.4 360.2c3.4-4.6 9.6-4.6 13 0" fill="none" stroke="#3c3c3c" stroke-width="1.1"/><circle cx="1403" cy="360.8" r="2.8" fill="#fff" stroke="#2a86d4" stroke-width="1.2"/><circle cx="1402.5" cy="360.3" r="1" fill="#2a86d4"/><path d="M1409 369.6l6-8.2a1.5 1.5 0 0 1 2.3 1.8l-5.5 8.2" fill="#fff" stroke="#3c3c3c" stroke-width="1.1"/><path d="M1408.3 369c-2 0-3.6 1.8-4.6 4.8 3.1.4 5.8-.5 7-2.8z" fill="#5c9fe3" stroke="#1c6cc4" stroke-width="1.1" stroke-linejoin="round"/><path d="M1398.5 389.5H1409.3L1413.5 393.7V409.5H1398.5Z" fill="#fff" stroke="#3c3c3c" stroke-width="1.1" stroke-linejoin="round"/><path d="M1409.3 389.5V393.7H1413.5" fill="none" stroke="#3c3c3c" stroke-width="1.1" stroke-linejoin="round"/><path d="M1400.5 394h4M1400.5 397h3M1400.5 400h5M1400.5 403h3M1400.5 406h2" stroke="#6f6f6f" stroke-width="1"/><path d="M1405.5 394h3M1404.5 397h5M1406 403h2" stroke="#f0861e" stroke-width="1"/><path d="M1405.4 409.8l1-4 8.4-8.4 3 3-8.4 8.4z" fill="#5c9fe3" stroke="#1c6cc4" stroke-width="1.1" stroke-linejoin="round"/><path d="M1398.5 424.5H1409.3L1413.5 428.7V444.5H1398.5Z" fill="#fff" stroke="#3c3c3c" stroke-width="1.1" stroke-linejoin="round"/><path d="M1409.3 424.5V428.7H1413.5" fill="none" stroke="#3c3c3c" stroke-width="1.1" stroke-linejoin="round"/><circle cx="1410" cy="430.6" r="1.9" fill="#fff" stroke="#1c6cc4" stroke-width="1.1"/><path d="M1403.6 434.2h12.8M1407.3 434.2v11h2.4v-4.6h.6v4.6h2.4v-11" fill="#fff" stroke="#1c6cc4" stroke-width="1.2" stroke-linejoin="round"/><path d="M1380 434.5l4 3-4 3z" fill="#fff"/><path d="M47.5 239V265.5H21" fill="none" stroke="#b4b4b4" stroke-width="1"/><path d="M1332.5 239V265.5H1357.5" fill="none" stroke="#b4b4b4" stroke-width="1"/><path d="M12.7 739.7h14.6v14.6H14.3l-1.6-1.6z" fill="none" stroke="#e3170d" stroke-width="1.35"/><path d="M15.3 739.7v4.6h9.4v-4.6M15.3 754.3v-5.2h9.2v5.2" fill="none" stroke="#e3170d" stroke-width="1.3"/><rect x="17" y="750.8" width="1.8" height="3.6" fill="#e3170d"/><path d="M34.5 737.5V756.5" stroke="#c8c8c8" stroke-width="1"/><path d="M220.5 737.5V756.5" stroke="#c8c8c8" stroke-width="1"/><path d="M520.5 737.5V756.5" stroke="#c8c8c8" stroke-width="1"/><path d="M567.5 737.5V756.5" stroke="#c8c8c8" stroke-width="1"/><path d="M701.5 737.5V756.5" stroke="#c8c8c8" stroke-width="1"/><path d="M906.5 737.5V756.5" stroke="#c8c8c8" stroke-width="1"/><path d="M976.5 737.5V756.5" stroke="#c8c8c8" stroke-width="1"/><path d="M1023.5 737.5V756.5" stroke="#c8c8c8" stroke-width="1"/><path d="M1053.5 737.5V756.5" stroke="#c8c8c8" stroke-width="1"/><path d="M1136.5 737.5V756.5" stroke="#c8c8c8" stroke-width="1"/><path d="M1226.5 737.5V756.5" stroke="#c8c8c8" stroke-width="1"/><path d="M1371.5 737.5V756.5" stroke="#c8c8c8" stroke-width="1"/><rect x="986.5" y="743.5" width="19" height="9" fill="none" stroke="#2a86d4" stroke-width="1.1"/><path d="M1009 741.5h4.5M1011.3 741.5v14M1009 755.5h4.5" stroke="#333" stroke-width="1"/><path d="M1147.2 740h8.4l3.4 3.4v12.3h-11.8z" fill="#0f63bd"/><path d="M1155.2 740.6v3.4h3.4z" fill="#fff"/><path d="M1165.5 740.5H1172.9L1176.5 744.1V755.5H1165.5Z" fill="#fff" stroke="#3c3c3c" stroke-width="1.15" stroke-linejoin="round"/><path d="M1172.9 740.5V744.1H1176.5" fill="none" stroke="#3c3c3c" stroke-width="1.15" stroke-linejoin="round"/><path d="M1178.5 740.5H1185.9L1189.5 744.1V755.5H1178.5Z" fill="#fff" stroke="#3c3c3c" stroke-width="1.15" stroke-linejoin="round"/><path d="M1185.9 740.5V744.1H1189.5" fill="none" stroke="#3c3c3c" stroke-width="1.15" stroke-linejoin="round"/><path d="M1196.5 743.6l3.1-3.1H1207.6V755.5H1196.5z" fill="#fff" stroke="#3c3c3c" stroke-width="1.15" stroke-linejoin="round"/><path d="M1199.6 740.5v3.1h-3.1" fill="none" stroke="#3c3c3c" stroke-width="1.15"/><path d="M1207.6 740.5H1215.8L1219.4 744.1V755.5H1207.6z" fill="#fff" stroke="#3c3c3c" stroke-width="1.15" stroke-linejoin="round"/><path d="M1215.8 740.5v3.6h3.6" fill="none" stroke="#3c3c3c" stroke-width="1.15"/><path d="M1236 748.2h10" stroke="#333" stroke-width="2"/><path d="M1251.3 748.8H1350" stroke="#707070" stroke-width="1.6"/><path d="M1261 746V751.4M1299.2 746V751.4" stroke="#707070" stroke-width="1.8"/><rect x="1303.4" y="743.5" width="3.4" height="9" rx=".6" fill="#e6e6e6" stroke="#555" stroke-width="1"/><path d="M1355.6 748.3h9.2M1360.2 743.7v9.2" stroke="#333" stroke-width="2"/><path d="M990.20 436.58 L990.70 436.93 L991.20 437.28 L991.70 437.63 L992.20 437.98 L992.70 438.33 L993.20 438.12 L993.70 437.77 L994.20 437.42 L994.70 437.07 L995.20 436.72 L995.70 436.37 L996.20 436.02 L996.70 435.67 L997.20 435.32 L997.70 434.97 L998.20 435.18 L998.70 435.53 L999.20 435.88 L999.70 436.23 L1000.20 436.58 L1000.70 436.93 L1001.20 437.28 L1001.70 437.63 L1002.20 437.98 L1002.70 438.33 L1003.20 438.12 L1003.70 437.77 L1004.20 437.42 L1004.70 437.07 L1005.20 436.72 L1005.70 436.37 L1006.20 436.02 L1006.70 435.67 L1007.20 435.32 L1007.70 434.97 L1008.20 435.18 L1008.70 435.53 L1009.20 435.88 L1009.70 436.23 L1010.20 436.58 L1010.70 436.93 L1011.20 437.28 L1011.70 437.63 L1012.20 437.98 L1012.70 438.33 L1013.20 438.12 L1013.70 437.77 L1014.20 437.42 L1014.70 437.07 L1015.20 436.72 L1015.70 436.37 L1016.20 436.02 L1016.70 435.67 L1017.20 435.32 L1017.70 434.97 L1018.20 435.18 L1018.70 435.53 L1019.20 435.88 L1019.70 436.23 L1020.20 436.58 L1020.70 436.93 L1021.20 437.28 L1021.70 437.63 L1022.20 437.98 L1022.70 438.33 L1023.20 438.12 L1023.70 437.77 L1024.20 437.42 L1024.70 437.07 L1025.20 436.72 L1025.70 436.37 L1026.20 436.02 L1026.70 435.67 L1027.20 435.32 L1027.70 434.97 L1028.20 435.18 L1028.70 435.53 L1029.20 435.88 L1029.70 436.23 L1030.20 436.58 L1030.70 436.93 L1031.20 437.28 L1031.70 437.63 L1032.20 437.98 L1032.70 438.33 L1033.20 438.12 L1033.70 437.77 L1034.20 437.42 L1034.70 437.07 L1035.20 436.72 L1035.70 436.37 L1036.20 436.02 L1036.70 435.67 L1037.20 435.32 L1037.70 434.97 L1038.20 435.18 L1038.70 435.53 L1039.20 435.88 L1039.70 436.23 L1040.20 436.58 L1040.70 436.93 L1041.20 437.28 L1041.70 437.63 L1042.20 437.98 L1042.70 438.33 L1043.20 438.12 L1043.70 437.77 L1044.20 437.42 L1044.70 437.07 L1045.20 436.72 L1045.70 436.37 L1046.20 436.02 L1046.70 435.67 L1047.20 435.32 L1047.70 434.97 L1048.20 435.18 L1048.70 435.53 L1049.20 435.88 L1049.70 436.23 L1050.20 436.58 L1050.70 436.93 L1051.20 437.28 L1051.70 437.63 L1052.20 437.98 L1052.70 438.33 L1053.20 438.12 L1053.70 437.77 L1054.20 437.42 L1054.70 437.07 L1055.20 436.72 L1055.70 436.37 L1056.20 436.02 L1056.70 435.67 L1057.20 435.32 L1057.70 434.97 L1058.20 435.18 L1058.70 435.53 L1059.20 435.88 L1059.70 436.23 L1060.20 436.58 L1060.70 436.93 L1061.20 437.28 L1061.70 437.63 L1062.20 437.98 L1062.70 438.33 L1063.20 438.12 L1063.70 437.77 L1064.20 437.42 L1064.70 437.07 L1065.20 436.72 L1065.70 436.37 L1066.20 436.02 L1066.70 435.67 L1067.20 435.32 L1067.70 434.97 L1068.20 435.18 L1068.70 435.53 L1069.20 435.88 L1069.70 436.23 L1070.20 436.58 L1070.70 436.93 L1071.20 437.28 L1071.70 437.63 L1072.20 437.98 L1072.70 438.33" fill="none" stroke="#ff0000" stroke-width="1.7" stroke-linejoin="round"/><path d="M856.00 480.51 L856.50 480.16 L857.00 479.81 L857.50 479.74 L858.00 480.09 L858.50 480.44 L859.00 480.79 L859.50 481.14 L860.00 481.49 L860.50 481.84 L861.00 482.19 L861.50 482.54 L862.00 482.89 L862.50 482.96 L863.00 482.61 L863.50 482.26 L864.00 481.91 L864.50 481.56 L865.00 481.21 L865.50 480.86 L866.00 480.51 L866.50 480.16 L867.00 479.81 L867.50 479.74 L868.00 480.09 L868.50 480.44 L869.00 480.79 L869.50 481.14 L870.00 481.49 L870.50 481.84 L871.00 482.19 L871.50 482.54 L872.00 482.89 L872.50 482.96 L873.00 482.61 L873.50 482.26 L874.00 481.91 L874.50 481.56 L875.00 481.21 L875.50 480.86 L876.00 480.51 L876.50 480.16 L877.00 479.81 L877.50 479.74 L878.00 480.09 L878.50 480.44 L879.00 480.79 L879.50 481.14 L880.00 481.49 L880.50 481.84 L881.00 482.19 L881.50 482.54 L882.00 482.89 L882.50 482.96 L883.00 482.61 L883.50 482.26 L884.00 481.91 L884.50 481.56 L885.00 481.21 L885.50 480.86 L886.00 480.51 L886.50 480.16 L887.00 479.81 L887.50 479.74 L888.00 480.09 L888.50 480.44 L889.00 480.79 L889.50 481.14 L890.00 481.49 L890.50 481.84 L891.00 482.19 L891.50 482.54 L892.00 482.89 L892.50 482.96 L893.00 482.61 L893.50 482.26 L894.00 481.91 L894.50 481.56 L895.00 481.21 L895.50 480.86 L896.00 480.51 L896.50 480.16 L897.00 479.81 L897.50 479.74 L898.00 480.09 L898.50 480.44 L899.00 480.79 L899.50 481.14 L900.00 481.49 L900.50 481.84 L901.00 482.19 L901.50 482.54 L902.00 482.89 L902.50 482.96 L903.00 482.61 L903.50 482.26 L904.00 481.91 L904.50 481.56 L905.00 481.21 L905.50 480.86 L906.00 480.51 L906.50 480.16 L907.00 479.81 L907.50 479.74 L908.00 480.09 L908.50 480.44 L909.00 480.79 L909.50 481.14 L910.00 481.49 L910.50 481.84 L911.00 482.19 L911.50 482.54 L912.00 482.89 L912.50 482.96 L913.00 482.61 L913.50 482.26 L914.00 481.91 L914.50 481.56 L915.00 481.21 L915.50 480.86 L916.00 480.51 L916.50 480.16 L917.00 479.81 L917.50 479.74 L918.00 480.09 L918.50 480.44 L919.00 480.79 L919.50 481.14 L920.00 481.49 L920.50 481.84 L921.00 482.19 L921.50 482.54 L922.00 482.89 L922.50 482.96 L923.00 482.61 L923.50 482.26 L924.00 481.91 L924.50 481.56 L925.00 481.21 L925.50 480.86 L926.00 480.51 L926.50 480.16 L927.00 479.81 L927.50 479.74 L928.00 480.09 L928.50 480.44 L929.00 480.79 L929.50 481.14 L930.00 481.49 L930.50 481.84 L931.00 482.19 L931.50 482.54 L932.00 482.89 L932.50 482.96 L933.00 482.61 L933.50 482.26 L934.00 481.91 L934.50 481.56 L935.00 481.21 L935.50 480.86 L936.00 480.51 L936.50 480.16 L937.00 479.81 L937.50 479.74 L938.00 480.09 L938.50 480.44 L939.00 480.79 L939.50 481.14 L940.00 481.49 L940.50 481.84 L941.00 482.19 L941.50 482.54 L942.00 482.89 L942.50 482.96 L943.00 482.61 L943.50 482.26 L944.00 481.91 L944.50 481.56 L945.00 481.21 L945.50 480.86 L946.00 480.51 L946.50 480.16 L947.00 479.81 L947.50 479.74 L948.00 480.09 L948.50 480.44 L949.00 480.79 L949.50 481.14 L950.00 481.49 L950.50 481.84 L951.00 482.19 L951.50 482.54 L952.00 482.89 L952.50 482.96 L953.00 482.61 L953.50 482.26 L954.00 481.91 L954.50 481.56 L955.00 481.21 L955.50 480.86 L956.00 480.51 L956.50 480.16 L957.00 479.81 L957.50 479.74 L958.00 480.09 L958.50 480.44 L959.00 480.79 L959.50 481.14 L960.00 481.49 L960.50 481.84 L961.00 482.19 L961.50 482.54 L962.00 482.89 L962.50 482.96 L963.00 482.61 L963.50 482.26 L964.00 481.91 L964.50 481.56 L965.00 481.21 L965.50 480.86 L966.00 480.51 L966.50 480.16 L967.00 479.81 L967.50 479.74 L968.00 480.09 L968.50 480.44 L969.00 480.79 L969.50 481.14 L970.00 481.49 L970.50 481.84 L971.00 482.19 L971.50 482.54 L972.00 482.89 L972.50 482.96 L973.00 482.61 L973.50 482.26 L974.00 481.91 L974.50 481.56 L975.00 481.21 L975.50 480.86 L976.00 480.51 L976.50 480.16 L977.00 479.81 L977.50 479.74 L978.00 480.09 L978.50 480.44 L979.00 480.79" fill="none" stroke="#ff0000" stroke-width="1.7" stroke-linejoin="round"/><path d="M781.20 525.80 L781.70 526.15 L782.20 526.50 L782.70 526.85 L783.20 527.20 L783.70 527.55 L784.20 527.90 L784.70 527.55 L785.20 527.20 L785.70 526.85 L786.20 526.50 L786.70 526.15 L787.20 525.80 L787.70 525.45 L788.20 525.10 L788.70 524.75 L789.20 524.40 L789.70 524.75 L790.20 525.10 L790.70 525.45 L791.20 525.80 L791.70 526.15 L792.20 526.50 L792.70 526.85 L793.20 527.20 L793.70 527.55 L794.20 527.90 L794.70 527.55 L795.20 527.20 L795.70 526.85 L796.20 526.50 L796.70 526.15 L797.20 525.80 L797.70 525.45 L798.20 525.10 L798.70 524.75 L799.20 524.40 L799.70 524.75 L800.20 525.10 L800.70 525.45 L801.20 525.80 L801.70 526.15 L802.20 526.50 L802.70 526.85 L803.20 527.20 L803.70 527.55 L804.20 527.90 L804.70 527.55 L805.20 527.20 L805.70 526.85 L806.20 526.50 L806.70 526.15 L807.20 525.80 L807.70 525.45 L808.20 525.10 L808.70 524.75 L809.20 524.40 L809.70 524.75 L810.20 525.10 L810.70 525.45 L811.20 525.80 L811.70 526.15 L812.20 526.50 L812.70 526.85 L813.20 527.20 L813.70 527.55 L814.20 527.90 L814.70 527.55 L815.20 527.20 L815.70 526.85 L816.20 526.50 L816.70 526.15 L817.20 525.80 L817.70 525.45 L818.20 525.10 L818.70 524.75 L819.20 524.40 L819.70 524.75 L820.20 525.10 L820.70 525.45 L821.20 525.80 L821.70 526.15 L822.20 526.50 L822.70 526.85 L823.20 527.20 L823.70 527.55 L824.20 527.90 L824.70 527.55 L825.20 527.20 L825.70 526.85 L826.20 526.50 L826.70 526.15 L827.20 525.80 L827.70 525.45 L828.20 525.10 L828.70 524.75 L829.20 524.40 L829.70 524.75 L830.20 525.10 L830.70 525.45 L831.20 525.80 L831.70 526.15 L832.20 526.50 L832.70 526.85 L833.20 527.20 L833.70 527.55 L834.20 527.90 L834.70 527.55 L835.20 527.20 L835.70 526.85 L836.20 526.50 L836.70 526.15 L837.20 525.80 L837.70 525.45 L838.20 525.10 L838.70 524.75 L839.20 524.40 L839.70 524.75 L840.20 525.10 L840.70 525.45 L841.20 525.80 L841.70 526.15 L842.20 526.50 L842.70 526.85 L843.20 527.20 L843.70 527.55 L844.20 527.90 L844.70 527.55 L845.20 527.20 L845.70 526.85 L846.20 526.50 L846.70 526.15 L847.20 525.80 L847.70 525.45 L848.20 525.10 L848.70 524.75 L849.20 524.40 L849.70 524.75 L850.20 525.10 L850.70 525.45 L851.20 525.80 L851.70 526.15 L852.20 526.50 L852.70 526.85 L853.20 527.20 L853.70 527.55 L854.20 527.90 L854.70 527.55 L855.20 527.20 L855.70 526.85 L856.20 526.50 L856.70 526.15 L857.20 525.80 L857.70 525.45 L858.20 525.10 L858.70 524.75 L859.20 524.40 L859.70 524.75 L860.20 525.10 L860.70 525.45 L861.20 525.80 L861.70 526.15 L862.20 526.50 L862.70 526.85 L863.20 527.20 L863.70 527.55 L864.20 527.90 L864.70 527.55 L865.20 527.20 L865.70 526.85 L866.20 526.50 L866.70 526.15 L867.20 525.80 L867.70 525.45 L868.20 525.10 L868.70 524.75 L869.20 524.40 L869.70 524.75 L870.20 525.10 L870.70 525.45 L871.20 525.80 L871.70 526.15 L872.20 526.50 L872.70 526.85 L873.20 527.20 L873.70 527.55 L874.20 527.90 L874.70 527.55 L875.20 527.20 L875.70 526.85 L876.20 526.50 L876.70 526.15 L877.20 525.80 L877.70 525.45 L878.20 525.10 L878.70 524.75 L879.20 524.40 L879.70 524.75 L880.20 525.10 L880.70 525.45 L881.20 525.80 L881.70 526.15 L882.20 526.50 L882.70 526.85 L883.20 527.20 L883.70 527.55 L884.20 527.90 L884.70 527.55 L885.20 527.20 L885.70 526.85 L886.20 526.50 L886.70 526.15 L887.20 525.80 L887.70 525.45 L888.20 525.10 L888.70 524.75 L889.20 524.40 L889.70 524.75 L890.20 525.10 L890.70 525.45 L891.20 525.80 L891.70 526.15 L892.20 526.50 L892.70 526.85 L893.20 527.20 L893.70 527.55 L894.20 527.90 L894.70 527.55 L895.20 527.20 L895.70 526.85 L896.20 526.50 L896.70 526.15 L897.20 525.80 L897.70 525.45 L898.20 525.10 L898.70 524.75 L899.20 524.40 L899.70 524.75 L900.20 525.10 L900.70 525.45 L901.20 525.80 L901.70 526.15 L902.20 526.50 L902.70 526.85 L903.20 527.20 L903.70 527.55 L904.20 527.90 L904.70 527.55 L905.20 527.20 L905.70 526.85 L906.20 526.50 L906.70 526.15 L907.20 525.80 L907.70 525.45 L908.20 525.10 L908.70 524.75 L909.20 524.40 L909.70 524.75 L910.20 525.10 L910.70 525.45 L911.20 525.80 L911.70 526.15 L912.20 526.50 L912.70 526.85 L913.20 527.20 L913.70 527.55 L914.20 527.90 L914.70 527.55 L915.20 527.20 L915.70 526.85 L916.20 526.50 L916.70 526.15 L917.20 525.80 L917.70 525.45 L918.20 525.10 L918.70 524.75 L919.20 524.40 L919.70 524.75 L920.20 525.10 L920.70 525.45 L921.20 525.80 L921.70 526.15 L922.20 526.50 L922.70 526.85" fill="none" stroke="#ff0000" stroke-width="1.7" stroke-linejoin="round"/><path d="M427.20 570.64 L427.70 570.99 L428.20 571.34 L428.70 571.69 L429.20 572.04 L429.70 572.39 L430.20 572.46 L430.70 572.11 L431.20 571.76 L431.70 571.41 L432.20 571.06 L432.70 570.71 L433.20 570.36 L433.70 570.01 L434.20 569.66 L434.70 569.31 L435.20 569.24 L435.70 569.59 L436.20 569.94 L436.70 570.29 L437.20 570.64 L437.70 570.99 L438.20 571.34 L438.70 571.69 L439.20 572.04 L439.70 572.39 L440.20 572.46 L440.70 572.11 L441.20 571.76 L441.70 571.41 L442.20 571.06 L442.70 570.71 L443.20 570.36 L443.70 570.01 L444.20 569.66 L444.70 569.31 L445.20 569.24 L445.70 569.59 L446.20 569.94 L446.70 570.29 L447.20 570.64 L447.70 570.99 L448.20 571.34 L448.70 571.69 L449.20 572.04 L449.70 572.39 L450.20 572.46 L450.70 572.11 L451.20 571.76 L451.70 571.41 L452.20 571.06 L452.70 570.71 L453.20 570.36 L453.70 570.01 L454.20 569.66 L454.70 569.31 L455.20 569.24 L455.70 569.59 L456.20 569.94 L456.70 570.29 L457.20 570.64 L457.70 570.99 L458.20 571.34 L458.70 571.69 L459.20 572.04 L459.70 572.39 L460.20 572.46 L460.70 572.11 L461.20 571.76 L461.70 571.41 L462.20 571.06 L462.70 570.71 L463.20 570.36 L463.70 570.01 L464.20 569.66 L464.70 569.31 L465.20 569.24 L465.70 569.59 L466.20 569.94 L466.70 570.29 L467.20 570.64 L467.70 570.99 L468.20 571.34 L468.70 571.69 L469.20 572.04 L469.70 572.39 L470.20 572.46 L470.70 572.11 L471.20 571.76 L471.70 571.41 L472.20 571.06 L472.70 570.71 L473.20 570.36 L473.70 570.01 L474.20 569.66 L474.70 569.31 L475.20 569.24 L475.70 569.59 L476.20 569.94 L476.70 570.29 L477.20 570.64 L477.70 570.99 L478.20 571.34 L478.70 571.69 L479.20 572.04 L479.70 572.39 L480.20 572.46 L480.70 572.11 L481.20 571.76 L481.70 571.41 L482.20 571.06 L482.70 570.71 L483.20 570.36 L483.70 570.01 L484.20 569.66 L484.70 569.31 L485.20 569.24 L485.70 569.59 L486.20 569.94 L486.70 570.29 L487.20 570.64 L487.70 570.99 L488.20 571.34 L488.70 571.69 L489.20 572.04 L489.70 572.39 L490.20 572.46 L490.70 572.11 L491.20 571.76 L491.70 571.41 L492.20 571.06 L492.70 570.71 L493.20 570.36 L493.70 570.01 L494.20 569.66 L494.70 569.31 L495.20 569.24 L495.70 569.59 L496.20 569.94 L496.70 570.29 L497.20 570.64 L497.70 570.99 L498.20 571.34 L498.70 571.69 L499.20 572.04 L499.70 572.39 L500.20 572.46 L500.70 572.11 L501.20 571.76 L501.70 571.41 L502.20 571.06 L502.70 570.71 L503.20 570.36 L503.70 570.01 L504.20 569.66 L504.70 569.31 L505.20 569.24 L505.70 569.59 L506.20 569.94 L506.70 570.29 L507.20 570.64 L507.70 570.99 L508.20 571.34 L508.70 571.69 L509.20 572.04 L509.70 572.39 L510.20 572.46 L510.70 572.11 L511.20 571.76 L511.70 571.41 L512.20 571.06 L512.70 570.71 L513.20 570.36 L513.70 570.01 L514.20 569.66 L514.70 569.31 L515.20 569.24 L515.70 569.59 L516.20 569.94 L516.70 570.29 L517.20 570.64 L517.70 570.99 L518.20 571.34 L518.70 571.69 L519.20 572.04 L519.70 572.39 L520.20 572.46 L520.70 572.11 L521.20 571.76 L521.70 571.41 L522.20 571.06 L522.70 570.71 L523.20 570.36 L523.70 570.01 L524.20 569.66 L524.70 569.31 L525.20 569.24 L525.70 569.59 L526.20 569.94 L526.70 570.29 L527.20 570.64 L527.70 570.99 L528.20 571.34 L528.70 571.69 L529.20 572.04 L529.70 572.39 L530.20 572.46 L530.70 572.11 L531.20 571.76 L531.70 571.41 L532.20 571.06 L532.70 570.71 L533.20 570.36 L533.70 570.01 L534.20 569.66 L534.70 569.31 L535.20 569.24 L535.70 569.59 L536.20 569.94 L536.70 570.29 L537.20 570.64 L537.70 570.99 L538.20 571.34 L538.70 571.69 L539.20 572.04 L539.70 572.39 L540.20 572.46 L540.70 572.11 L541.20 571.76 L541.70 571.41 L542.20 571.06 L542.70 570.71 L543.20 570.36 L543.70 570.01 L544.20 569.66 L544.70 569.31 L545.20 569.24 L545.70 569.59 L546.20 569.94 L546.70 570.29 L547.20 570.64 L547.70 570.99 L548.20 571.34 L548.70 571.69 L549.20 572.04 L549.70 572.39 L550.20 572.46 L550.70 572.11 L551.20 571.76 L551.70 571.41 L552.20 571.06 L552.70 570.71 L553.20 570.36 L553.70 570.01 L554.20 569.66 L554.70 569.31 L555.20 569.24 L555.70 569.59 L556.20 569.94 L556.70 570.29 L557.20 570.64 L557.70 570.99 L558.20 571.34 L558.70 571.69" fill="none" stroke="#ff0000" stroke-width="1.7" stroke-linejoin="round"/></svg>
<div class="t" style="left:36px;top:14px;font-size:15px;letter-spacing:0.14px">Без имени 1 — LibreOffice Writer</div>
<div class="t" style="left:11.5px;top:45px;font-size:15px;letter-spacing:0px"><u>Ф</u>айл</div>
<div class="t" style="left:67.5px;top:45px;font-size:15px;letter-spacing:0px"><u>П</u>равка</div>
<div class="t" style="left:138.5px;top:45px;font-size:15px;letter-spacing:0px"><u>В</u>ид</div>
<div class="t" style="left:184.5px;top:45px;font-size:15px;letter-spacing:-0.35px">Вст<u>а</u>вка</div>
<div class="t" style="left:257.5px;top:45px;font-size:15px;letter-spacing:0.25px">Фо<u>р</u>мат</div>
<div class="t" style="left:331px;top:45px;font-size:15px;letter-spacing:0px">С<u>т</u>или</div>
<div class="t" style="left:393px;top:45px;font-size:15px;letter-spacing:0px">Та<u>б</u>лица</div>
<div class="t" style="left:471.5px;top:45px;font-size:15px;letter-spacing:0.3px">Фор<u>м</u>а</div>
<div class="t" style="left:539px;top:45px;font-size:15px;letter-spacing:0.1px">С<u>е</u>рвис</div>
<div class="t" style="left:608.8px;top:45px;font-size:15px;letter-spacing:0.6px"><u>О</u>кно</div>
<div class="t" style="left:665px;top:45px;font-size:15px;letter-spacing:0px"><u>С</u>правка</div>
<div class="t" style="left:9px;top:117px;font-size:15px">Базовый</div>
<div class="t" style="left:293px;top:117px;font-size:15px;letter-spacing:-0.42px">Comic Sans MS</div>
<div class="t" style="left:532px;top:117px;font-size:15px">12 пт</div>
<div class="t" style="left:107.7px;top:150.5px;width:30px;text-align:center;font-size:11.5px;color:#5a5a5a">1</div>
<div class="t" style="left:183.2px;top:150.5px;width:30px;text-align:center;font-size:11.5px;color:#5a5a5a">2</div>
<div class="t" style="left:258.8px;top:150.5px;width:30px;text-align:center;font-size:11.5px;color:#5a5a5a">3</div>
<div class="t" style="left:334.3px;top:150.5px;width:30px;text-align:center;font-size:11.5px;color:#5a5a5a">4</div>
<div class="t" style="left:409.9px;top:150.5px;width:30px;text-align:center;font-size:11.5px;color:#5a5a5a">5</div>
<div class="t" style="left:485.4px;top:150.5px;width:30px;text-align:center;font-size:11.5px;color:#5a5a5a">6</div>
<div class="t" style="left:561.0px;top:150.5px;width:30px;text-align:center;font-size:11.5px;color:#5a5a5a">7</div>
<div class="t" style="left:636.5px;top:150.5px;width:30px;text-align:center;font-size:11.5px;color:#5a5a5a">8</div>
<div class="t" style="left:712.0px;top:150.5px;width:30px;text-align:center;font-size:11.5px;color:#5a5a5a">9</div>
<div class="t" style="left:787.6px;top:150.5px;width:30px;text-align:center;font-size:11.5px;color:#5a5a5a">10</div>
<div class="t" style="left:863.1px;top:150.5px;width:30px;text-align:center;font-size:11.5px;color:#5a5a5a">11</div>
<div class="t" style="left:938.7px;top:150.5px;width:30px;text-align:center;font-size:11.5px;color:#5a5a5a">12</div>
<div class="t" style="left:1014.2px;top:150.5px;width:30px;text-align:center;font-size:11.5px;color:#5a5a5a">13</div>
<div class="t" style="left:1089.8px;top:150.5px;width:30px;text-align:center;font-size:11.5px;color:#5a5a5a">14</div>
<div class="t" style="left:1165.3px;top:150.5px;width:30px;text-align:center;font-size:11.5px;color:#5a5a5a">15</div>
<div class="t" style="left:1240.9px;top:150.5px;width:30px;text-align:center;font-size:11.5px;color:#5a5a5a">16</div>
<div class="t" style="left:1316.4px;top:150.5px;width:30px;text-align:center;font-size:11.5px;color:#5a5a5a">17</div>
<div class="t" style="left:44.60px;top:741.6px;font-size:15px;letter-spacing:-0.114px">Страница 1 из 1</div>
<div class="t" style="left:230.20px;top:741.6px;font-size:15px;letter-spacing:-0.221px">79 слов, 493 символа</div>
<div class="t" style="left:576.00px;top:741.6px;font-size:15px;letter-spacing:0.500px">Базовый</div>
<div class="t" style="left:776.00px;top:741.6px;font-size:15px;letter-spacing:0.250px">Русский</div>
<div class="t" style="left:1378.00px;top:741.6px;font-size:15px;letter-spacing:-0.375px">160 %</div>
<div class="t doc" id="d0" style="left:48.5px;top:276.45px;font-size:29px;letter-spacing:0.553px">1. Если участник говорит, что тренд, высказывания, видео для него</div>
<div class="t doc" id="d1" style="left:48.5px;top:321.18px;font-size:29px;letter-spacing:0.636px">считается оскорблением то вы должны прислушаться, иначе это, что считалось</div>
<div class="t doc" id="d2" style="left:48.5px;top:365.91px;font-size:29px;letter-spacing:0.696px">оскорблением будет запрещено и внесено в список Запрещённых трендов и т.д.</div>
<div class="t doc" id="d3" style="left:48.5px;top:410.64px;font-size:29px;letter-spacing:0.776px">2. Оскорбление без причины или просто так (даже если это рофл) то вы будите</div>
<div class="t doc" id="d4" style="left:48.5px;top:455.37px;font-size:29px;letter-spacing:0.655px">заблокированы и внесены в чёрный список форума Pitois.ru</div>
<div class="t doc" id="d5" style="left:48.5px;top:500.10px;font-size:29px;letter-spacing:0.636px">3. Доксинг, деанон и т.п запрещён и вы будете забанены на 7 лет (также ситуация</div>
<div class="t doc" id="d6" style="left:48.5px;top:544.83px;font-size:29px;letter-spacing:0.475px">решает на какой год вас забанить, подробно можете почитать здесь)</div>
<div class="t doc" id="d7" style="left:48.5px;top:589.56px;font-size:29px;letter-spacing:1.000px">4.</div>
</body></html>
